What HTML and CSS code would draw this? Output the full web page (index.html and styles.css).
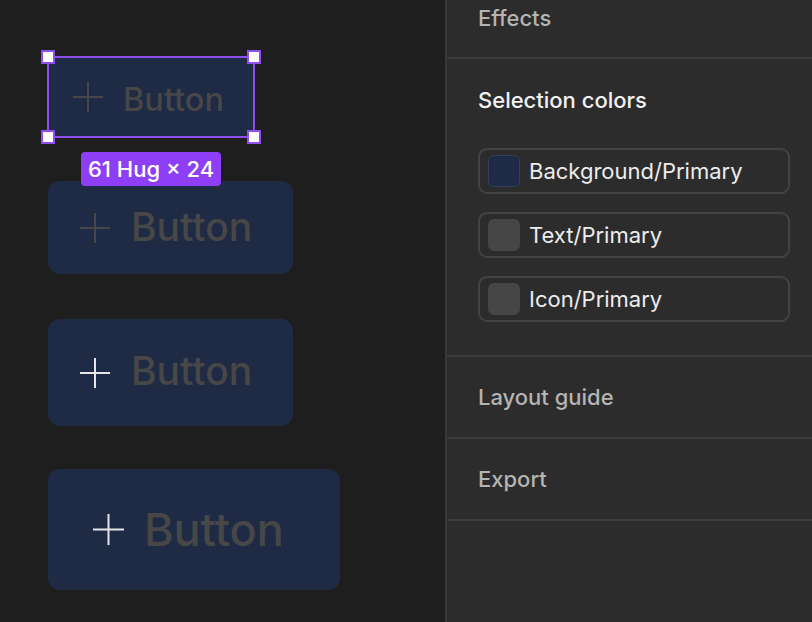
FILE: index.html
```html
<!DOCTYPE html>
<html lang="en">
  <head>
    <meta charset="UTF-8" />
    <meta name="viewport" content="width=device-width, initial-scale=1.0" />
    <title>Button variants</title>
    <link rel="stylesheet" href="styles.css">
  </head>
  <body>
    <div class="app">
      <div class="canvas">
        <div class="btn btn-1 selected">
          <svg class="plus" width="30" height="30" viewBox="0 0 30 30"><path d="M15 0v30M0 15h30" /></svg>
          <span class="label">Button</span>
          <span class="handle tl"></span>
          <span class="handle tr"></span>
          <span class="handle bl"></span>
          <span class="handle br"></span>
          <span class="size-tag">61 Hug × 24</span>
        </div>
        <div class="btn btn-2">
          <svg class="plus" width="30" height="30" viewBox="0 0 30 30"><path d="M15 0v30M0 15h30" /></svg>
          <span class="label">Button</span>
        </div>
        <div class="btn btn-3">
          <svg class="plus light" width="30" height="30" viewBox="0 0 30 30"><path d="M15 0v30M0 15h30" /></svg>
          <span class="label">Button</span>
        </div>
        <div class="btn btn-4">
          <svg class="plus light" width="31" height="31" viewBox="0 0 31 31"><path d="M15.5 0v31M0 15.5h31" /></svg>
          <span class="label">Button</span>
        </div>
      </div>

      <div class="panel">
        <div class="section section-effects">
          <div class="section-title">Effects</div>
        </div>
        <div class="section section-colors">
          <div class="section-title active">Selection colors</div>
          <div class="color-list">
            <div class="color-row">
              <span class="swatch swatch-bg"></span>
              <span class="color-name">Background/Primary</span>
            </div>
            <div class="color-row">
              <span class="swatch"></span>
              <span class="color-name">Text/Primary</span>
            </div>
            <div class="color-row">
              <span class="swatch"></span>
              <span class="color-name">Icon/Primary</span>
            </div>
          </div>
        </div>
        <div class="section">
          <div class="section-title">Layout guide</div>
        </div>
        <div class="section">
          <div class="section-title">Export</div>
        </div>
      </div>
    </div>
  </body>
</html>
```

FILE: styles.css
```css
html, body {
  margin: 0;
  padding: 0;
}
body {
  width: 812px;
  height: 622px;
  overflow: hidden;
  background: #1e1e1e;
  font-family: Inter, "Noto Sans", sans-serif;
}
.app {
  display: flex;
  height: 622px;
}

/* canvas */
.canvas {
  width: 445px;
  flex-shrink: 0;
  padding: 57px 0 0 48px;
  box-sizing: border-box;
  display: flex;
  flex-direction: column;
  align-items: flex-start;
  gap: 44px;
}
.btn {
  position: relative;
  display: flex;
  align-items: center;
  background: #1f2a45;
  border-radius: 12px;
  box-sizing: border-box;
}
.btn .label {
  color: #474747;
  font-weight: 500;
  line-height: 1;
}
.plus {
  flex-shrink: 0;
  stroke: #474747;
  stroke-width: 2;
  fill: none;
}
.plus.light {
  stroke: #e6e6e6;
}
.btn-1 {
  width: 206px;
  height: 80px;
  border-radius: 0;
  padding-left: 25px;
  gap: 20px;
}
.btn-1 .label {
  font-size: 32.5px;
  margin-top: 6px;
}
.btn-2 {
  width: 245px;
  height: 93px;
  padding-left: 32px;
  gap: 21px;
}
.btn-2 .label {
  font-size: 39px;
  margin-top: -2px;
}
.btn-3 {
  width: 245px;
  height: 107px;
  padding-left: 32px;
  gap: 21px;
  margin-top: 1px;
}
.btn-3 .label {
  font-size: 39px;
  margin-top: -5px;
}
.btn-4 {
  width: 292px;
  height: 121px;
  padding-left: 45px;
  gap: 20px;
  margin-top: -1px;
}
.btn-4 .label {
  font-size: 45px;
  margin-top: -1px;
}

/* selection overlay */
.selected::after {
  content: "";
  position: absolute;
  inset: -1px;
  border: 2px solid #8e4ef0;
  pointer-events: none;
}
.handle {
  position: absolute;
  width: 10px;
  height: 10px;
  background: #fff;
  border: 2px solid #8e4ef0;
  z-index: 2;
}
.handle.tl { left: -7px; top: -7px; }
.handle.tr { right: -7px; top: -7px; }
.handle.bl { left: -7px; bottom: -7px; }
.handle.br { right: -7px; bottom: -7px; }
.size-tag {
  position: absolute;
  left: 33px;
  top: 95px;
  height: 34px;
  padding: 0 7px;
  display: flex;
  align-items: center;
  background: #8e3ff5;
  color: #fff;
  border-radius: 4px;
  font-size: 22px;
  font-weight: 500;
  white-space: nowrap;
  z-index: 3;
}

/* right panel */
.panel {
  flex: 1;
  background: #2c2c2c;
  border-left: 2px solid #383838;
}
.section {
  height: 82px;
  box-sizing: border-box;
  border-bottom: 2px solid #3c3c3c;
  padding: 0 31px;
  display: flex;
  align-items: center;
}
.section-effects {
  height: 59px;
  align-items: flex-start;
  padding-top: 4px;
}
.section-title {
  font-size: 22px;
  font-weight: 500;
  color: #b4b4b4;
  line-height: 28px;
}
.section-title.active {
  color: #f2f2f2;
}
.section-colors {
  height: 298px;
  flex-direction: column;
  align-items: stretch;
  padding-top: 27px;
  padding-right: 22px;
}
.color-list {
  margin-top: 34px;
  display: flex;
  flex-direction: column;
  gap: 18px;
}
.color-row {
  height: 46px;
  box-sizing: border-box;
  border: 2px solid #434343;
  border-radius: 9px;
  display: flex;
  align-items: center;
  padding-left: 8px;
  gap: 9px;
}
.swatch {
  width: 32px;
  height: 32px;
  box-sizing: border-box;
  border-radius: 6px;
  background: #464646;
}
.swatch-bg {
  background: #1f2a47;
  border: 1.5px solid #34405e;
}
.color-name {
  font-size: 22px;
  color: #ececec;
}
```
